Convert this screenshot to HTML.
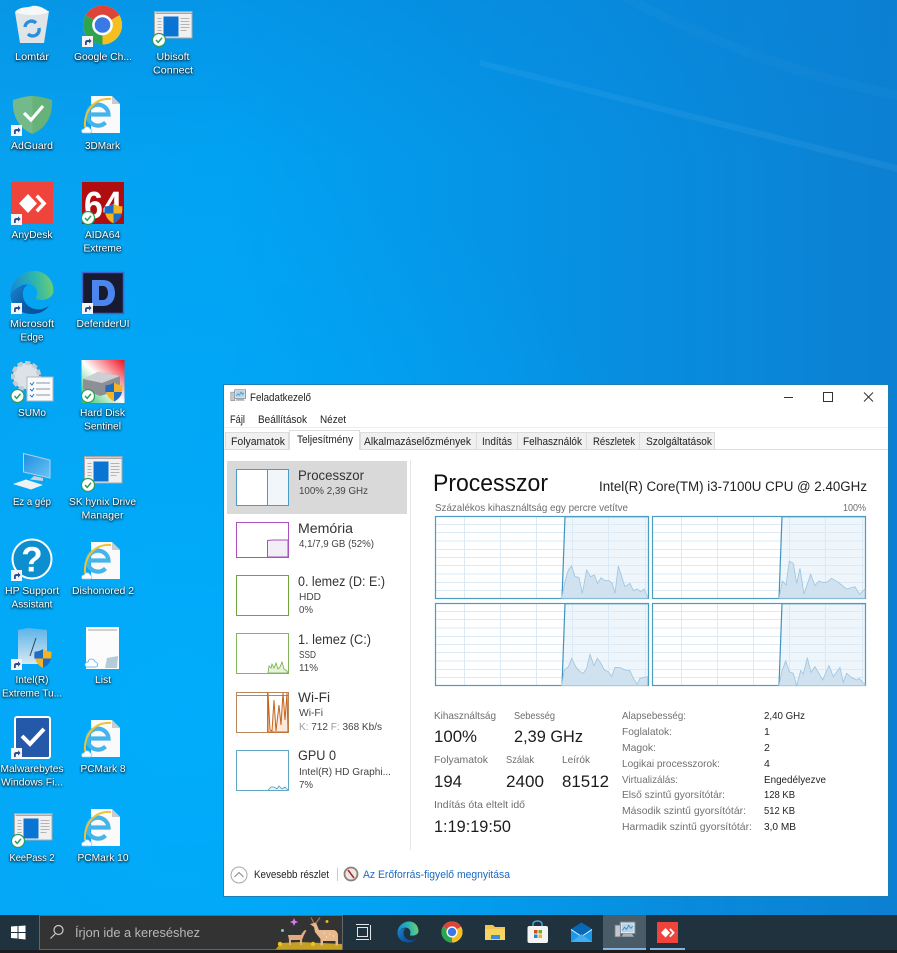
<!DOCTYPE html>
<html lang="hu"><head><meta charset="utf-8"><title>Feladatkezelő</title>
<style>
html,body{margin:0;padding:0;width:897px;height:953px;overflow:hidden;background:#0696e6}
svg{display:block;filter:blur(.3px)}
text{font-family:"Liberation Sans",sans-serif;font-size:11px;fill:#222}
.l text{fill:#fff;font-size:10.5px;text-anchor:middle}
.l{filter:drop-shadow(0 1px 1px rgba(0,0,0,.9)) drop-shadow(0 0 1px rgba(0,0,0,.4))}
.tab{fill:#f0f0f0;stroke:#dcdcdc}
.g{fill:#6d6d6d}
.h{font-size:13.5px;fill:#333}
.s{font-size:10.5px;fill:#444}
.b{font-size:17px;fill:#1c1c1c}
.k{font-size:10.5px;fill:#707070}
.v{font-size:10.5px;fill:#222}
</style></head><body>
<svg width="897" height="953" viewBox="0 0 897 953" xmlns="http://www.w3.org/2000/svg">
<defs>
<linearGradient id="bg" x1="0" y1="0" x2="1" y2="0"><stop offset="0" stop-color="#06a2f0"/><stop offset=".25" stop-color="#02a2f2"/><stop offset=".6" stop-color="#0692e4"/><stop offset="1" stop-color="#0c80d2"/></linearGradient>
<linearGradient id="topdark" x1="0" y1="0" x2="0" y2="1"><stop offset="0" stop-color="#0a7fd4" stop-opacity=".35"/><stop offset="1" stop-color="#0a7fd4" stop-opacity="0"/></linearGradient>
<radialGradient id="glow" cx=".2" cy=".75" r=".6"><stop offset="0" stop-color="#00b0ff" stop-opacity=".75"/><stop offset="1" stop-color="#00b0ff" stop-opacity="0"/></radialGradient>
<linearGradient id="edge" x1="0" y1=".5" x2="1" y2=".4"><stop offset="0" stop-color="#1a88d4"/><stop offset=".55" stop-color="#2cb4b0"/><stop offset="1" stop-color="#6cd070"/></linearGradient>
<linearGradient id="edge2" x1="0" y1="0" x2="1" y2=".6"><stop offset="0" stop-color="#1c84d0"/><stop offset=".6" stop-color="#0a5aa6"/><stop offset="1" stop-color="#0b4f96"/></linearGradient>
<linearGradient id="hds" x1="0" y1="1" x2="1" y2="0"><stop offset="0" stop-color="#28c060"/><stop offset=".5" stop-color="#fff"/><stop offset="1" stop-color="#f01020"/></linearGradient>
<linearGradient id="cube" x1="0" y1="0" x2="0" y2="1"><stop offset="0" stop-color="#5ab4e8"/><stop offset="1" stop-color="#d8e8f4"/></linearGradient>
<linearGradient id="scr" x1="0" y1="0" x2="1" y2="1"><stop offset="0" stop-color="#1c8ee0"/><stop offset="1" stop-color="#6cc4f4"/></linearGradient>
<g id="short"><rect width="11" height="11" fill="#f4f4f4"/><path d="M3 9V6.2C3 4.8 4 4 5.4 4H7V2.4L9.6 5 7 7.6V6H5.6C5 6 4.8 6.4 4.8 7V9Z" fill="#2c4c92"/></g>
<g id="badge"><circle r="6.5" fill="#fff" stroke="#2c9c58" stroke-width="1.2"/><path d="M-3 0L-.8 2.4 3 -2.2" fill="none" stroke="#2c9c58" stroke-width="1.5"/></g>
<g id="win"><rect width="37.5" height="26.5" fill="#f0f0f0" stroke="#a8a8a8"/><rect x="1" y="1" width="36" height="1.5" fill="#a8a8a8"/><rect x="9" y="5" width="15" height="20" fill="#0a74d4"/><path d="M3 7h4M3 10h4M3 13h4M3 16h4M3 19h4M26 7h9M26 10h9M26 13h9M26 16h9M26 19h6" stroke="#b4b4b4"/></g>
<g id="ie">
<path d="M91 96H112L120 104V133H91Z" fill="#fafafa"/><path d="M112 96V104H120Z" fill="#c8ccd0"/>
<path d="M88.500 114.500H108.500A10.500 10.500 0 1 0 105.500 122.500" fill="none" stroke="#45b4ea" stroke-width="4.200"/>
<path d="M85 127C84 110 95 98 111 99" fill="none" stroke="#efc234" stroke-width="2"/>
<path d="M83 133c-2 0-2-4 1-4 1-3 5-3 6 0 2 0 3 4 0 4Z" fill="#fff" stroke="#8cc8ee" stroke-width=".7"/>
</g>
<g id="chrome">
<circle r="10" fill="#fff"/>
<path d="M0 0L-8.66 -5A10 10 0 0 1 8.66 -5Z" fill="#dc4438"/>
<path d="M0 0L8.66 -5A10 10 0 0 1 0 10Z" fill="#f4c020"/>
<path d="M0 0L0 10A10 10 0 0 1 -8.66 -5Z" fill="#2ea44e"/>
<circle r="5.300" fill="#fff"/><circle r="4" fill="#3a78e6"/>
</g>
<g id="edgei">
<path d="M-10 1C-10 -6 -4 -10 1 -10C7 -10 10 -5 10 -1C10 2 7 3.500 4 3.500C2 3.500 1.500 3 2 2C3 0 2 -3 -1 -4C-5 -5 -8 -2 -10 1Z" fill="url(#edge)"/>
<path d="M-10 1C-8 -2 -5 -4 -2 -3.500C-5 -2 -5 3 -2 6C1 8.500 5 8.500 8 6C6 9 3 10 0 10C-6 10 -10 6 -10 1Z" fill="url(#edge2)"/>
</g>
<g id="any"><rect width="42" height="42" fill="#ef443b"/><path d="M17 12L26 21.500 17 31 8 21.500Z" fill="#fff"/><path d="M27 12.500L35.500 21.500 27 30.500 24.500 28 30.500 21.500 24.500 15Z" fill="#fff"/></g>
<g id="shield"><path d="M0 -9C3 -7 6 -6.5 8 -6.5C8.5 1 6 6 0 9C-6 6 -8.5 1 -8 -6.5C-6 -6.5 -3 -7 0 -9Z" fill="#f4b422"/><path d="M0 -9V0H-8.2C-8.4 -2 -8.2 -4 -8 -6.5C-6 -6.5 -3 -7 0 -9Z" fill="#1e6cc4"/><path d="M0 0H7.6C6.8 4 4.4 7 0 9Z" fill="#1e6cc4"/></g>
<g id="tm">
<rect x="6" y="1" width="14" height="11" fill="#e4e8ec" stroke="#7c8790"/><rect x="7.5" y="2.5" width="11" height="8" fill="#b4d4ea"/><path d="M8 9L10 6 12 8 14 4 16 7 18 5" fill="none" stroke="#3a84b8" stroke-width=".8"/>
<rect x="1" y="4" width="5" height="11" fill="#c4c8cc" stroke="#7c8790" stroke-width=".7"/><path d="M9 12h8l2 3H7Z" fill="#a8b0b6"/>
</g>
<g id="grid">
<path d="M127 82.5L130 .5H213V82.5Z" fill="#eff6fb"/>
<path d="M0 8.5H213M0 16.5H213M0 25H213M0 33.500H213M0 41.500H213M0 49.500H213M0 58H213M0 66.500H213M0 74.500H213M29.500 0V83M65.500 0V83M101.500 0V83M137.500 0V83M173.500 0V83M210.500 0V83" stroke="#dbeaf4" fill="none"/>
<path d="M127 82.500L130 .5" stroke="#4094bc" stroke-width="1.200" fill="none"/>
<path d="M130 .7H213" stroke="#2080ac" stroke-width="1.200" fill="none"/>
<rect x=".5" y=".5" width="213" height="82" fill="none" stroke="#4a9cc0" stroke-width="1.200"/>
</g>
</defs>

<!-- wallpaper -->
<rect width="897" height="953" fill="url(#bg)"/>
<rect width="897" height="953" fill="url(#glow)"/>
<rect width="897" height="160" fill="url(#topdark)"/>
<path d="M480 60L897 165V172L480 66Z" fill="#fff" opacity=".05"/>
<path d="M640 0C720 40 800 70 897 90V100C790 80 700 40 620 0Z" fill="#fff" opacity=".025"/>

<!-- recycle -->
<path d="M15 12L49 11 44 43H20Z" fill="#dfe4e8"/><path d="M15 12C20 6 28 8 32 6 38 5 44 8 49 12 40 16 24 16 15 12Z" fill="#f6f7f8"/>
<path d="M25 27A6.500 6.500 0 0 1 36 23M39 28A6.500 6.500 0 0 1 28 34" fill="none" stroke="#2a8ede" stroke-width="3.400"/>
<use href="#chrome" transform="translate(102.500 25) scale(1.95)"/>
<use href="#short" x="82" y="36"/>
<use href="#win" x="154.500" y="11.500"/><use href="#badge" x="159" y="40"/>

<path d="M13 100C20 98 26 96 32.500 96 39 96 46 98 52 100 53 116 46 128 32.500 134 19 128 12 116 13 100Z" fill="#67b279"/>
<path d="M13 100C20 98 26 96 32.500 96V134C19 128 12 116 13 100Z" fill="#73b98a"/>
<path d="M24 113L31 120 43 106" fill="none" stroke="#fff" stroke-width="3.200"/>
<use href="#short" x="11" y="125"/>
<use href="#ie"/>

<use href="#any" x="11" y="182"/><use href="#short" x="11" y="214"/>
<rect x="82" y="182" width="42" height="42" fill="#b00d10"/>
<text x="84" y="218" style="font-size:38px;font-weight:bold;fill:#fff" textLength="38" lengthAdjust="spacingAndGlyphs">64</text>
<use href="#shield" transform="translate(113.500 213.500) scale(1.100)"/>
<use href="#badge" x="88" y="218"/>

<use href="#edgei" transform="translate(32 292.500) scale(2.150)"/><use href="#short" x="11" y="303"/>
<rect x="82.500" y="272.500" width="41" height="41" fill="#181a30" stroke="#4462cc" stroke-width="1.500"/>
<path d="M92 280H103C112 280 115 287 115 293 115 300 111 306 103 306H92ZM99 286V300H103C106 300 108 297 108 293 108 289 106 286 103 286Z" fill="#4a86ee" fill-rule="evenodd"/>
<use href="#short" x="82" y="303"/>

<circle cx="26" cy="376" r="13" fill="#dce2e8" stroke="#c4ccd2" stroke-width="4" stroke-dasharray="5 2.500"/>
<rect x="27" y="377" width="26" height="24" fill="#f8fafc" stroke="#aeb8c0"/>
<path d="M36 383H50M36 389H50M36 395H50" stroke="#8898a8"/><path d="M30 383l2 2 2-3M30 389l2 2 2-3M30 395l2 2 2-3" stroke="#2878c8" fill="none"/>
<use href="#badge" x="17.500" y="396"/>
<rect x="81.500" y="360" width="43" height="43" fill="url(#hds)"/>
<path d="M83 379L98 372 120 376V390L100 396 83 389Z" fill="#8c9094"/><path d="M83 379L98 372 120 376 102 383Z" fill="#ccd0d4"/>
<use href="#shield" transform="translate(114 392) scale(1.050)"/>
<use href="#badge" x="88" y="396"/>

<path d="M23.500 453.500L50 460V478L23.500 472Z" fill="url(#scr)" stroke="#b4d0e4"/><path d="M34 476L43 478V481L30 479.500Z" fill="#c8d4dc"/>
<path d="M13 484L26 479.500 43 485 31 489.500Z" fill="#eef2f5"/>
<use href="#win" x="84.500" y="456.500"/><use href="#badge" x="88" y="485"/>

<circle cx="32" cy="559" r="19.500" fill="#0d8fcf" stroke="#fff" stroke-width="2"/>
<text x="32" y="571.500" style="font-size:35px;font-weight:bold;fill:#fff;text-anchor:middle">?</text>
<use href="#short" x="11" y="570"/>
<use href="#ie" transform="translate(0 446)"/>

<path d="M18 630L28 628 47 630V664H18Z" fill="url(#cube)"/><path d="M30 656L36 638" stroke="#345" stroke-width="1"/>
<use href="#shield" transform="translate(43 658.500) scale(1.050)"/>
<use href="#short" x="11" y="659"/>
<rect x="86" y="627" width="33" height="42" fill="#fcfcfc"/><path d="M88 630H117" stroke="#d0d0d0" stroke-width="2"/>
<path d="M107 658L118 656 117 668H105Z" fill="#b4ccd8"/>
<path d="M87 667c-3 0-3-5 1-5 1-4 6-4 7 0 3 0 4 5 0 5Z" fill="#fff" stroke="#4aa8e8" stroke-width=".8"/>

<rect x="15" y="717" width="35" height="41" rx="2" fill="#2458a8" stroke="#fff" stroke-width="2"/>
<path d="M22 736L30 744 44 729" fill="none" stroke="#fff" stroke-width="4"/>
<use href="#short" x="11" y="748"/>
<use href="#ie" transform="translate(0 624)"/>

<use href="#win" x="14.500" y="813.500"/><use href="#badge" x="18" y="841"/>
<use href="#ie" transform="translate(0 713)"/>

<g class="l">
<text x="32" y="60" textLength="34" lengthAdjust="spacingAndGlyphs">Lomtár</text>
<text x="103" y="60" textLength="58" lengthAdjust="spacingAndGlyphs">Google Ch...</text>
<text x="173" y="60" textLength="33" lengthAdjust="spacingAndGlyphs">Ubisoft</text><text x="173" y="73.500" textLength="40" lengthAdjust="spacingAndGlyphs">Connect</text>
<text x="32" y="149" textLength="42" lengthAdjust="spacingAndGlyphs">AdGuard</text>
<text x="102.500" y="149" textLength="35" lengthAdjust="spacingAndGlyphs">3DMark</text>
<text x="32" y="238" textLength="41" lengthAdjust="spacingAndGlyphs">AnyDesk</text>
<text x="102.500" y="238" textLength="35" lengthAdjust="spacingAndGlyphs">AIDA64</text><text x="102.500" y="251.500" textLength="38" lengthAdjust="spacingAndGlyphs">Extreme</text>
<text x="32" y="327" textLength="44" lengthAdjust="spacingAndGlyphs">Microsoft</text><text x="32" y="340.500" textLength="23" lengthAdjust="spacingAndGlyphs">Edge</text>
<text x="103" y="327" textLength="53" lengthAdjust="spacingAndGlyphs">DefenderUI</text>
<text x="32" y="416" textLength="28" lengthAdjust="spacingAndGlyphs">SUMo</text>
<text x="102.500" y="416" textLength="45" lengthAdjust="spacingAndGlyphs">Hard Disk</text><text x="102.500" y="429.500" textLength="37" lengthAdjust="spacingAndGlyphs">Sentinel</text>
<text x="32" y="505" textLength="38" lengthAdjust="spacingAndGlyphs">Ez a gép</text>
<text x="102.500" y="505" textLength="67" lengthAdjust="spacingAndGlyphs">SK hynix Drive</text><text x="102.500" y="518.500" textLength="42" lengthAdjust="spacingAndGlyphs">Manager</text>
<text x="32" y="594" textLength="54" lengthAdjust="spacingAndGlyphs">HP Support</text><text x="32" y="607.500" textLength="41" lengthAdjust="spacingAndGlyphs">Assistant</text>
<text x="103" y="594" textLength="62" lengthAdjust="spacingAndGlyphs">Dishonored 2</text>
<text x="32" y="683" textLength="33" lengthAdjust="spacingAndGlyphs">Intel(R)</text><text x="32" y="696.500" textLength="60" lengthAdjust="spacingAndGlyphs">Extreme Tu...</text>
<text x="103" y="683" textLength="16" lengthAdjust="spacingAndGlyphs">List</text>
<text x="32" y="772" textLength="63" lengthAdjust="spacingAndGlyphs">Malwarebytes</text><text x="32" y="785.500" textLength="62" lengthAdjust="spacingAndGlyphs">Windows Fi...</text>
<text x="103" y="772" textLength="45" lengthAdjust="spacingAndGlyphs">PCMark 8</text>
<text x="32" y="861" textLength="45" lengthAdjust="spacingAndGlyphs">KeePass 2</text>
<text x="103" y="861" textLength="51" lengthAdjust="spacingAndGlyphs">PCMark 10</text>
</g>

<!-- window -->
<rect x="223.500" y="384.500" width="665" height="512" fill="#fff" stroke="#1a7fb6"/>
<use href="#tm" transform="translate(230 389) scale(.78)"/>
<text x="250" y="401" textLength="61" lengthAdjust="spacingAndGlyphs">Feladatkezelő</text>
<path d="M784 397.500H793" stroke="#333"/><rect x="823.500" y="392.500" width="9" height="9" fill="none" stroke="#333"/><path d="M864 392.500L873 401.500M873 392.500L864 401.500" stroke="#333"/>
<text x="230" y="423" textLength="15" lengthAdjust="spacingAndGlyphs">Fájl</text><text x="258" y="423" textLength="49" lengthAdjust="spacingAndGlyphs">Beállítások</text><text x="320" y="423" textLength="26" lengthAdjust="spacingAndGlyphs">Nézet</text>
<path d="M224 427.500H888" stroke="#ededed"/>
<path d="M224 449.500H888" stroke="#dcdcdc"/>
<rect class="tab" x="225.500" y="432.500" width="63" height="17"/>
<rect class="tab" x="360.500" y="432.500" width="116" height="17"/>
<rect class="tab" x="476.500" y="432.500" width="41" height="17"/>
<rect class="tab" x="517.500" y="432.500" width="69" height="17"/>
<rect class="tab" x="586.500" y="432.500" width="53" height="17"/>
<rect class="tab" x="639.500" y="432.500" width="75" height="17"/>
<path d="M289.500 450V430.500H359.500V450" fill="#fff" stroke="#dcdcdc"/>
<text x="231" y="445" textLength="54" lengthAdjust="spacingAndGlyphs">Folyamatok</text>
<text x="297" y="443" textLength="56" lengthAdjust="spacingAndGlyphs">Teljesítmény</text>
<text x="364" y="445" textLength="107" lengthAdjust="spacingAndGlyphs">Alkalmazáselőzmények</text>
<text x="482" y="445" textLength="30" lengthAdjust="spacingAndGlyphs">Indítás</text>
<text x="523" y="445" textLength="59" lengthAdjust="spacingAndGlyphs">Felhasználók</text>
<text x="593" y="445" textLength="42" lengthAdjust="spacingAndGlyphs">Részletek</text>
<text x="646" y="445" textLength="66" lengthAdjust="spacingAndGlyphs">Szolgáltatások</text>

<!-- left panel -->
<rect x="227" y="461" width="180" height="53" fill="#d9d9d9"/>
<path d="M410.500 460V850" stroke="#e6e6e6"/>
<rect x="236.500" y="469.500" width="52" height="36" fill="#fff" stroke="#4a9cc4"/>
<rect x="267.500" y="469.500" width="21" height="36" fill="#f1f6fa" stroke="#4a9cc4"/>
<text class="h" x="298" y="480" textLength="66" lengthAdjust="spacingAndGlyphs">Processzor</text>
<text class="s" x="299" y="494" textLength="69" lengthAdjust="spacingAndGlyphs">100% 2,39 GHz</text>

<rect x="236.500" y="522.500" width="52" height="35" fill="#fff" stroke="#a94fc0"/>
<path d="M267.500 557V540.500L273 540H288V557Z" fill="#f3eef6" stroke="#a94fc0"/>
<text class="h" x="298" y="533" textLength="55" lengthAdjust="spacingAndGlyphs">Memória</text>
<text class="s" x="299" y="547" textLength="75" lengthAdjust="spacingAndGlyphs">4,1/7,9 GB (52%)</text>

<rect x="236.500" y="575.500" width="52" height="40" fill="#fff" stroke="#6fa63c"/>
<text class="h" x="298" y="586" textLength="87" lengthAdjust="spacingAndGlyphs">0. lemez (D: E:)</text>
<text class="s" x="299" y="600" textLength="22" lengthAdjust="spacingAndGlyphs">HDD</text><text class="s" x="299" y="613" textLength="14" lengthAdjust="spacingAndGlyphs">0%</text>

<rect x="236.500" y="633.500" width="52" height="40" fill="#fff" stroke="#82b65a"/>
<path d="M268 673L269 666 271 668 272 664 274 668 276 663 278 669 280 667 282 662 284 669 287 671 288 673Z" fill="#e6f2dc" stroke="#72b040" stroke-width=".8"/>
<text class="h" x="298" y="644" textLength="73" lengthAdjust="spacingAndGlyphs">1. lemez (C:)</text>
<text class="s" x="299" y="658" textLength="17" lengthAdjust="spacingAndGlyphs">SSD</text><text class="s" x="299" y="671" textLength="19" lengthAdjust="spacingAndGlyphs">11%</text>

<rect x="236.500" y="692.500" width="52" height="40" fill="#fff" stroke="#b8885a"/>
<path d="M237 695.500H288" stroke="#b8885a"/><path d="M267.500 693V732" stroke="#b8885a"/>
<path d="M268 693L270 730 272 731 274 700 276 731 279 705 281 725 283 693 285 720 287 693 288 732H268Z" fill="#fbeadc" stroke="#c4651e" stroke-width="1"/>
<text class="h" x="298" y="702" textLength="32" lengthAdjust="spacingAndGlyphs">Wi-Fi</text>
<text class="s" x="299" y="716" textLength="24" lengthAdjust="spacingAndGlyphs">Wi-Fi</text>
<text class="s" x="299" y="730" textLength="83" lengthAdjust="spacingAndGlyphs"><tspan fill="#999">K:</tspan> 712 <tspan fill="#999">F:</tspan> 368 Kb/s</text>

<rect x="236.500" y="750.500" width="52" height="40" fill="#fff" stroke="#60a8c4"/>
<path d="M268 790L271 787 274 787 277 789 279 786 282 789 285 787 288 790" fill="#e6f2f8" stroke="#4a9cc4" stroke-width=".8"/>
<text class="h" x="298" y="760" textLength="38" lengthAdjust="spacingAndGlyphs">GPU 0</text>
<text class="s" x="299" y="775" textLength="92" lengthAdjust="spacingAndGlyphs">Intel(R) HD Graphi...</text>
<text class="s" x="299" y="788" textLength="14" lengthAdjust="spacingAndGlyphs">7%</text>

<!-- main -->
<text x="433" y="491" textLength="115" lengthAdjust="spacingAndGlyphs" style="font-size:24px;fill:#111">Processzor</text>
<text x="599" y="491" textLength="268" lengthAdjust="spacingAndGlyphs" style="font-size:13.500px;fill:#222">Intel(R) Core(TM) i3-7100U CPU @ 2.40GHz</text>
<text class="g" x="435" y="511" textLength="193" lengthAdjust="spacingAndGlyphs" style="font-size:10.500px">Százalékos kihasználtság egy percre vetítve</text>
<text class="g" x="843" y="511" textLength="23" lengthAdjust="spacingAndGlyphs" style="font-size:10.500px">100%</text>

<use href="#grid" x="435" y="516"/><use href="#grid" x="652" y="516"/><use href="#grid" x="435" y="603"/><use href="#grid" x="652" y="603"/>

<g transform="translate(425 495) scale(.3333)" fill="#d0e2ef" stroke="#9cc4de" stroke-width="2.400">
<path d="M410 310L420 260 430 225 440 213 450 245 462 247 472 295 485 225 497 245 508 240 518 265 528 248 540 257 552 257 562 265 570 295 580 213 590 245 600 275 615 265 625 287 637 282 647 290 657 282 667 303V310Z"/>
<path d="M410 572L418 525 430 515 440 490 452 515 465 530 475 535 485 520 495 478 507 512 517 490 528 505 538 525 550 530 560 545 570 517 585 518 600 525 615 527 625 550 637 568 645 550 667 545V572Z"/>
</g>
<g transform="translate(650 495) scale(.3333)" fill="#d0e2ef" stroke="#9cc4de" stroke-width="2.400">
<path d="M387 310L397 258 408 270 418 198 430 205 440 265 450 220 462 297 482 238 495 272 507 258 518 262 530 262 545 250 565 262 590 282 615 275 628 298 645 282V310Z"/>
<path d="M387 572L395 530 407 498 418 530 430 535 440 572 452 527 460 537 472 488 483 532 495 515 518 555 537 512 550 545 570 517 580 562 590 535 605 548 620 555 628 550 640 565 645 565V572Z"/>
</g>

<text class="g" x="434" y="719" textLength="62" lengthAdjust="spacingAndGlyphs" style="font-size:10.500px">Kihasználtság</text>
<text class="g" x="514" y="719" textLength="41" lengthAdjust="spacingAndGlyphs" style="font-size:10.500px">Sebesség</text>
<text class="b" x="434" y="742" textLength="43" lengthAdjust="spacingAndGlyphs">100%</text>
<text class="b" x="514" y="742" textLength="69" lengthAdjust="spacingAndGlyphs">2,39 GHz</text>
<text class="g" x="434" y="763" textLength="54" lengthAdjust="spacingAndGlyphs" style="font-size:10.500px">Folyamatok</text>
<text class="g" x="506" y="763" textLength="28" lengthAdjust="spacingAndGlyphs" style="font-size:10.500px">Szálak</text>
<text class="g" x="562" y="763" textLength="28" lengthAdjust="spacingAndGlyphs" style="font-size:10.500px">Leírók</text>
<text class="b" x="434" y="787" textLength="28" lengthAdjust="spacingAndGlyphs">194</text>
<text class="b" x="506" y="787" textLength="38" lengthAdjust="spacingAndGlyphs">2400</text>
<text class="b" x="562" y="787" textLength="47" lengthAdjust="spacingAndGlyphs">81512</text>
<text class="g" x="434" y="808" textLength="91" lengthAdjust="spacingAndGlyphs" style="font-size:10.500px">Indítás óta eltelt idő</text>
<text class="b" x="434" y="832" textLength="77" lengthAdjust="spacingAndGlyphs">1:19:19:50</text>

<text class="k" x="622" y="719" textLength="64" lengthAdjust="spacingAndGlyphs">Alapsebesség:</text><text class="v" x="764" y="719" textLength="41" lengthAdjust="spacingAndGlyphs">2,40 GHz</text>
<text class="k" x="622" y="735" textLength="50" lengthAdjust="spacingAndGlyphs">Foglalatok:</text><text class="v" x="764" y="735">1</text>
<text class="k" x="622" y="751" textLength="34" lengthAdjust="spacingAndGlyphs">Magok:</text><text class="v" x="764" y="751">2</text>
<text class="k" x="622" y="767" textLength="98" lengthAdjust="spacingAndGlyphs">Logikai processzorok:</text><text class="v" x="764" y="767">4</text>
<text class="k" x="622" y="783" textLength="56" lengthAdjust="spacingAndGlyphs">Virtualizálás:</text><text class="v" x="764" y="783" textLength="62" lengthAdjust="spacingAndGlyphs">Engedélyezve</text>
<text class="k" x="622" y="798" textLength="103" lengthAdjust="spacingAndGlyphs">Első szintű gyorsítótár:</text><text class="v" x="764" y="798" textLength="31" lengthAdjust="spacingAndGlyphs">128 KB</text>
<text class="k" x="622" y="814" textLength="124" lengthAdjust="spacingAndGlyphs">Második szintű gyorsítótár:</text><text class="v" x="764" y="814" textLength="31" lengthAdjust="spacingAndGlyphs">512 KB</text>
<text class="k" x="622" y="830" textLength="130" lengthAdjust="spacingAndGlyphs">Harmadik szintű gyorsítótár:</text><text class="v" x="764" y="830" textLength="32" lengthAdjust="spacingAndGlyphs">3,0 MB</text>

<!-- footer -->
<circle cx="239" cy="875" r="8" fill="#fff" stroke="#a8a8a8"/><path d="M234.500 877L239 872.500 243.500 877" fill="none" stroke="#888"/>
<text x="254" y="878" textLength="75" lengthAdjust="spacingAndGlyphs">Kevesebb részlet</text>
<path d="M337.500 868V881" stroke="#ccc"/>
<circle cx="351" cy="874" r="6.500" fill="#ebe7e2" stroke="#8a8078" stroke-width="1.800"/><path d="M348 870L354 878" stroke="#b02030" stroke-width="1.500"/>
<text x="363" y="878" textLength="147" lengthAdjust="spacingAndGlyphs" style="fill:#1b6ac0">Az Erőforrás-figyelő megnyitása</text>

<!-- taskbar -->
<rect y="915" width="897" height="38" fill="#20323e"/>
<rect y="950" width="897" height="3" fill="#1b1d1e"/>
<path d="M11 926.500L17.500 926V932H11ZM18.500 926L25.500 925.500V932H18.500ZM11 933H17.500V938.500L11 938ZM18.500 933H25.500V939.500L18.500 938.700Z" fill="#fff"/>
<rect x="39.500" y="915.500" width="303" height="34" fill="#333" stroke="#666"/>
<circle cx="58.500" cy="930" r="4.500" fill="none" stroke="#ccc" stroke-width="1.200"/><path d="M55 934L50.500 938.500" stroke="#ccc" stroke-width="1.200"/>
<text x="75" y="937" textLength="125" lengthAdjust="spacingAndGlyphs" style="font-size:12.500px;fill:#b8b8b8">Írjon ide a kereséshez</text>
<!-- deer doodle -->
<path d="M275 950L281 943 300 942 342 944V949.500H275Z" fill="#c4a024"/>
<circle cx="280" cy="944" r="2.200" fill="#f0c020"/><circle cx="313" cy="944" r="2.200" fill="#f0c020"/>
<path d="M294 918L295.200 920.800 298 922 295.200 923.200 294 926 292.800 923.200 290 922 292.800 920.800Z" fill="#d878f0"/>
<circle cx="282.500" cy="930.500" r="1.500" fill="#60d0e0"/><circle cx="327" cy="921.500" r="1.500" fill="#e8b820"/>
<path d="M288 935H301L303 932 305 930 306.500 930.500 304 935 302 940V945H300V940H291V945H289V940Z" fill="#e2ac80"/>
<path d="M310 924L316 922.500 319 930H334Q338 931 338 936V945.500H335.500V941H323V945.500H320.500V939L315 932 314 927Z" fill="#e8b88e"/>
<path d="M314 923L311 917.500M316 923L320 917.500" stroke="#a87850" stroke-width="1.200"/>
<path d="M324 933h1M329 934h1M333 936h1M326 937h1" stroke="#fff4e4"/>
<!-- tasks -->
<rect x="357.500" y="927.500" width="10" height="9" fill="none" stroke="#e4e4e4"/><path d="M356 924.500H369M356 939.500H369M370.500 925V940" stroke="#e4e4e4"/>
<use href="#edgei" transform="translate(408 932) scale(1.050)"/>
<use href="#chrome" transform="translate(452 932) scale(1.050)"/>
<path d="M485 925H493L495 927H505V940H485Z" fill="#f2c64c"/><rect x="485" y="929" width="20" height="11" fill="#f6d466"/><rect x="491" y="935" width="9" height="4" fill="#3a90d0"/>
<rect x="527.500" y="926" width="20.500" height="17" rx="2" fill="#f4f4f4"/><path d="M533 926V924C533 920 542 920 542 924V926" fill="none" stroke="#40a8e0" stroke-width="1.500"/>
<rect x="534" y="930" width="3.500" height="3.500" fill="#e04820"/><rect x="538.500" y="930" width="3.500" height="3.500" fill="#70b020"/><rect x="534" y="934.500" width="3.500" height="3.500" fill="#1e88d8"/><rect x="538.500" y="934.500" width="3.500" height="3.500" fill="#f0b020"/>
<path d="M571 929H592V942H571Z" fill="#1c98e8"/><path d="M571 929L581.500 922.500 592 929 581.500 936Z" fill="#0868b8"/><path d="M571 929.500L581.500 936.500 592 929.500" fill="none" stroke="#e8f4fc" stroke-width=".9"/><path d="M571 942L581.500 934 592 942Z" fill="#40aef0"/>
<rect x="603" y="915" width="43" height="35" fill="#4a5c68"/><rect x="603" y="948" width="43" height="2" fill="#86b6e0"/>
<use href="#tm" transform="translate(614 921) scale(1.050)"/>
<use href="#any" transform="translate(657 922) scale(.5)"/>
<rect x="650" y="948" width="35" height="2" fill="#86b6e0"/>
</svg>
</body></html>
